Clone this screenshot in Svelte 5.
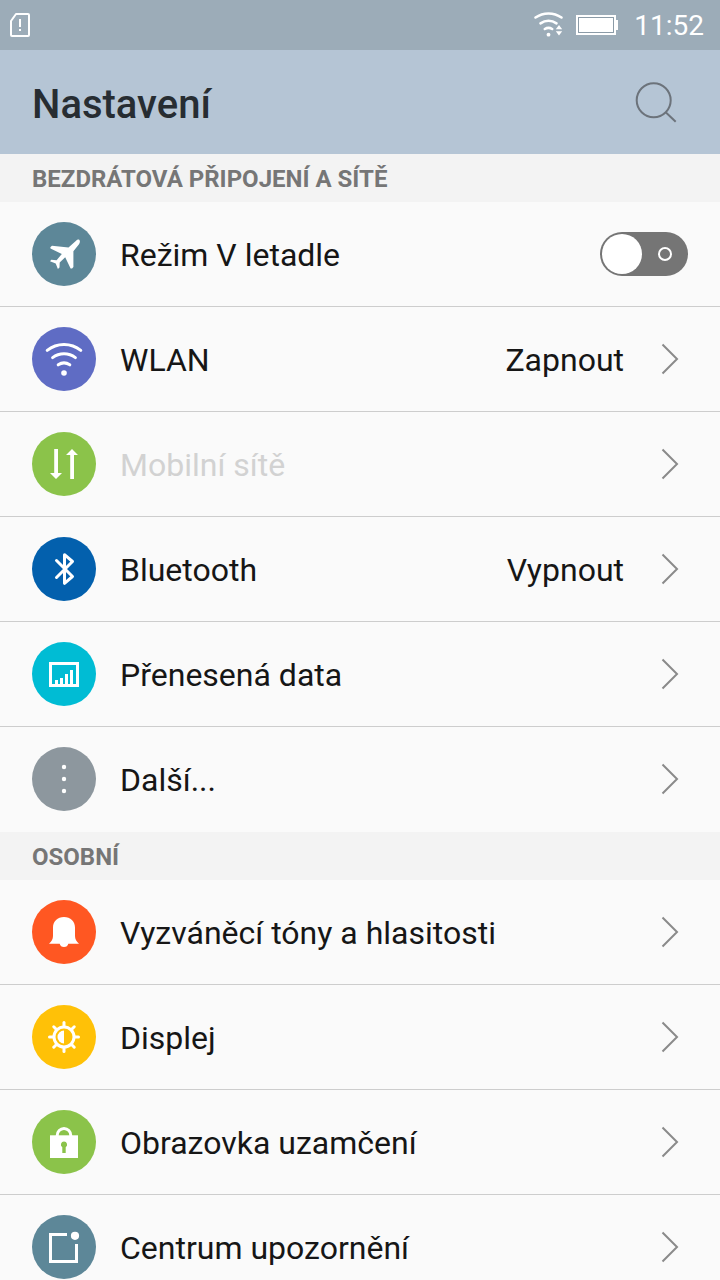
<script>
  const sections = [
    {
      title: "BEZDRÁTOVÁ PŘIPOJENÍ A SÍTĚ",
      items: [
        { icon: "plane", color: "#5d8798", label: "Režim V letadle", toggle: true },
        { icon: "wifi", color: "#5f6cc4", label: "WLAN", value: "Zapnout" },
        { icon: "mobile", color: "#8bc34a", label: "Mobilní sítě", disabled: true },
        { icon: "bluetooth", color: "#0360ad", label: "Bluetooth", value: "Vypnout" },
        { icon: "data", color: "#00bcd4", label: "Přenesená data" },
        { icon: "more", color: "#8d979e", label: "Další..." },
      ],
    },
    {
      title: "OSOBNÍ",
      items: [
        { icon: "bell", color: "#ff5722", label: "Vyzváněcí tóny a hlasitosti" },
        { icon: "display", color: "#ffc107", label: "Displej" },
        { icon: "lock", color: "#8bc34a", label: "Obrazovka uzamčení" },
        { icon: "notify", color: "#5d8798", label: "Centrum upozornění" },
      ],
    },
  ];

  let airplane = $state(false);
</script>

{#snippet glyph(name, color)}
  <svg class="icon" viewBox="0 0 64 64" aria-hidden="true">
    <circle cx="32" cy="32" r="32" fill={color} />
    {#if name === "plane"}
      <path
        fill="#fff"
        d="M47.4 18c-.8-.8-2.300-.3-3.600.9L36.500 25.400 20 23.700l-1.700 1.500.2 1.200 11.300 5.700-5.200 6.200L19.300 37.800 18 39.200l5.700 2.300 2.200 5.400 1.600-1.300.2-5 5.500-5.400 5.400 11.300h1.500l1.300-1.500V29.200l5.400-6.700c1.200-1.500 1.500-3.600.6-4.500z"
      />
    {:else if name === "wifi"}
      <g fill="none" stroke="#fff" stroke-width="3" stroke-linecap="round">
        <path d="M15.2 23.400a26.700 26.700 0 0 1 33.600 0" />
        <path d="M20.600 30.600a19 19 0 0 1 22.800 0" />
        <path d="M26.200 37.800a10.500 10.500 0 0 1 11.600 0" />
      </g>
      <circle cx="32" cy="46" r="2.800" fill="#fff" />
    {:else if name === "mobile"}
      <path fill="#fff" d="M22.200 17H26v24h4l-6 6-6-6h4.200zM38.200 47H42V23h4l-6-6-6 6h4.200z" />
    {:else if name === "bluetooth"}
      <path
        fill="none"
        stroke="#fff"
        stroke-width="3"
        stroke-linejoin="round"
        stroke-linecap="round"
        d="M24.500 23.500l16 16-8 6.800V17.700l8 6.800-16 16"
      />
    {:else if name === "data"}
      <path fill="none" stroke="#fff" stroke-width="3" d="M18.500 21.500h27v22h-27z" />
      <path fill="#fff" d="M23 38h3v6h-3zM28 36h3v8h-3zM33 32h3v12h-3zM38 28h3v16h-3z" />
    {:else if name === "more"}
      <g fill="#fff">
        <circle cx="32" cy="20" r="2.200" />
        <circle cx="32" cy="32" r="2.200" />
        <circle cx="32" cy="44" r="2.200" />
      </g>
    {:else if name === "bell"}
      <path
        fill="#fff"
        d="M32 17c-6.500 0-11 4.300-11 10.500V36c0 3.500-1.500 5.500-4 7.700h10.700c.4 2 2 3.300 4.300 3.300s3.900-1.300 4.300-3.300H47c-2.500-2.200-4-4.200-4-7.700v-8.500C43 21.300 38.500 17 32 17z"
      />
    {:else if name === "display"}
      <circle cx="32" cy="32" r="10" fill="none" stroke="#fff" stroke-width="3" />
      <path fill="#fff" d="M32 25.500v13a6.500 6.500 0 0 1 0-13z" />
      <g stroke="#fff" stroke-width="3" stroke-linecap="round">
        {#each [0, 45, 90, 135, 180, 225, 270, 315] as angle}
          <path d="M32 21v-3.500" transform="rotate({angle} 32 32)" />
        {/each}
      </g>
    {:else if name === "lock"}
      <path fill="none" stroke="#fff" stroke-width="3" d="M25.200 27v-1.500a6.800 7 0 0 1 13.600 0V27" />
      <path fill="#fff" d="M18 25.300h28V48H18z" />
      <path fill={color} d="M32 31.500a3.100 3.100 0 0 0-1.700 5.700V43h3.400v-5.800a3.100 3.100 0 0 0-1.700-5.700z" />
    {:else if name === "notify"}
      <path fill="none" stroke="#fff" stroke-width="3" d="M35 19.500H18.500v27h26V29" />
      <circle cx="43" cy="20.800" r="4.100" fill="#fff" />
    {/if}
  </svg>
{/snippet}

{#snippet rowStart(item)}
  {@render glyph(item.icon, item.color)}
  <span class="label">{item.label}</span>
{/snippet}

<div class="screen">
  <div class="status-bar">
    <svg class="sim" viewBox="0 0 20 24" aria-hidden="true">
      <path
        fill="none"
        stroke="#fff"
        stroke-width="2"
        stroke-linejoin="round"
        d="M6 1h12a1 1 0 0 1 1 1v20a1 1 0 0 1-1 1H2a1 1 0 0 1-1-1V8z"
      />
      <path fill="#fff" d="M9 6h2v8H9zM9 16h2v2H9z" />
    </svg>
    <svg class="signal" viewBox="0 0 32 26" aria-hidden="true">
      <g fill="none" stroke="#fff" stroke-width="2.600" stroke-linecap="round">
        <path d="M2.500 5.500a23 23 0 0 1 26 0" />
        <path d="M7.500 11.300a14.500 14.500 0 0 1 16 0" />
        <path d="M11.800 17a7 7 0 0 1 7.400 0" />
      </g>
      <circle cx="15.500" cy="22.700" r="1.900" fill="#fff" />
      <path fill="#fff" d="M26 13l3.200 4.200h-6.400zM26 23.500l3.200-4.200h-6.400z" />
    </svg>
    <svg class="battery" viewBox="0 0 42 20" aria-hidden="true">
      <path fill="none" stroke="#fff" stroke-width="2" d="M1 1h38v18H1z" />
      <path fill="#fff" d="M3 3h34v14H3zM40 5h2v10h-2z" />
      <path fill="none" stroke="#8b9ba7" d="M2.500 2.500h35v15h-35z" />
    </svg>
    <time>11:52</time>
  </div>

  <header>
    <h1>Nastavení</h1>
    <button type="button" class="search" aria-label="Hledat">
      <svg viewBox="0 0 48 48" aria-hidden="true">
        <g fill="none" stroke="#6c737b" stroke-width="2">
          <circle cx="21.700" cy="22.300" r="17" />
          <path d="M33.700 34.300l10 9.500" />
        </g>
      </svg>
    </button>
  </header>

  <main>
    {#each sections as section}
      <section>
        <h2>{section.title}</h2>
        <ul>
          {#each section.items as item}
            <li>
              {#if item.toggle}
                <label class="row">
                  {@render rowStart(item)}
                  <input type="checkbox" class="switch" role="switch" bind:checked={airplane} />
                </label>
              {:else}
                <button type="button" class="row" disabled={item.disabled}>
                  {@render rowStart(item)}
                  {#if item.value}
                    <span class="value">{item.value}</span>
                  {/if}
                  <svg class="chevron" viewBox="0 0 32 32" aria-hidden="true">
                    <path fill="none" stroke="#8a8a8a" stroke-width="2" d="M6.500 1.500L21 16 6.500 30.500" />
                  </svg>
                </button>
              {/if}
            </li>
          {/each}
        </ul>
      </section>
    {/each}
  </main>
</div>

<style>
  :global(body) {
    margin: 0;
  }

  .screen {
    display: flex;
    flex-direction: column;
    height: 100vh;
    background: #fafafa;
    color: #161616;
    font-family: Roboto, "Noto Sans", sans-serif;
  }

  .screen svg {
    display: block;
    flex: none;
  }

  .status-bar {
    display: flex;
    align-items: center;
    flex: none;
    height: 50px;
    padding: 0 16px 0 10px;
    background: #9cacb8;
    color: #fff;
  }

  .sim {
    width: 20px;
    height: 24px;
    margin-right: auto;
  }

  .signal {
    width: 32px;
    height: 26px;
    margin-right: 11px;
  }

  .battery {
    width: 42px;
    height: 20px;
    margin-right: 16px;
  }

  time {
    padding-top: 2px;
    font-size: 28px;
    line-height: 48px;
  }

  header {
    display: flex;
    align-items: center;
    justify-content: space-between;
    flex: none;
    height: 104px;
    padding: 0 40px 0 32px;
    background: #b5c5d5;
  }

  h1 {
    margin: 0;
    padding-top: 6px;
    color: #272d32;
    font-size: 40px;
    font-weight: 500;
    line-height: 98px;
  }

  .search {
    padding: 0;
    border: none;
    background: none;
    cursor: pointer;
  }

  .search svg {
    width: 48px;
    height: 48px;
  }

  main {
    flex: 1;
    min-height: 0;
    overflow-y: auto;
    scrollbar-width: none;
  }

  h2 {
    margin: 0;
    padding: 2px 32px 0;
    background: #f3f3f3;
    color: #767676;
    font-size: 24px;
    font-weight: 700;
    line-height: 46px;
  }

  ul {
    margin: 0;
    padding: 0;
    list-style: none;
  }

  li {
    border-bottom: 1px solid #cdcdcd;
  }

  li:last-child {
    border-bottom-color: #fafafa;
  }

  .row {
    display: flex;
    align-items: center;
    box-sizing: border-box;
    width: 100%;
    height: 104px;
    padding: 0 32px;
    border: none;
    background: none;
    color: inherit;
    font: inherit;
    font-size: 32px;
    text-align: left;
    cursor: pointer;
  }

  .row:disabled {
    color: #d2d2d2;
    cursor: default;
  }

  .icon {
    width: 64px;
    height: 64px;
    margin-right: 24px;
  }

  .label,
  .value {
    padding-top: 2px;
  }

  .label {
    flex: 1;
  }

  .value {
    margin-right: 32px;
  }

  .chevron {
    width: 32px;
    height: 32px;
  }

  .switch {
    position: relative;
    flex: none;
    appearance: none;
    width: 88px;
    height: 44px;
    margin: 0;
    border-radius: 22px;
    background: #757575;
    cursor: pointer;
  }

  .switch::before,
  .switch::after {
    content: "";
    position: absolute;
    box-sizing: border-box;
    border-radius: 50%;
  }

  .switch::before {
    top: 2px;
    left: 2px;
    width: 40px;
    height: 40px;
    background: #fff;
  }

  .switch::after {
    top: 15px;
    right: 16px;
    width: 14px;
    height: 14px;
    border: 2px solid #fff;
  }

  .switch:checked {
    background: #5d8798;
  }

  .switch:checked::before {
    left: 46px;
  }

  .switch:checked::after {
    right: 58px;
  }
</style>
